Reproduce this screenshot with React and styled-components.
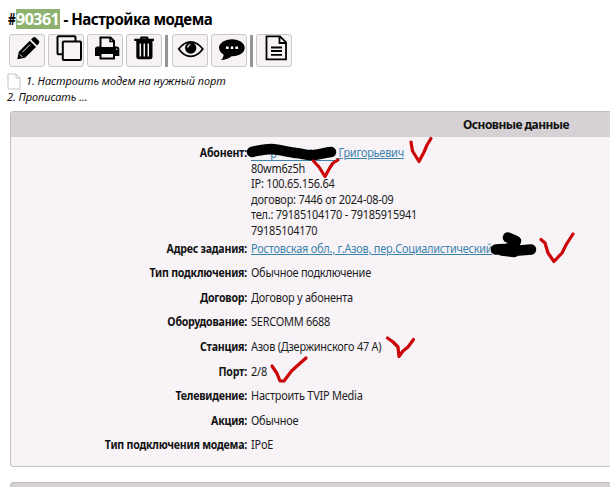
import React from 'react';
import styled, { createGlobalStyle } from 'styled-components';

const Global = createGlobalStyle`
  * { box-sizing: border-box; }
  body { margin: 0; background: #fff; color: #1c1c1c; overflow: hidden; font: 12px/15.6px "Noto Sans", sans-serif; }
`;
const Page = styled.main`
  position: relative; width: 610px; height: 487px; overflow: hidden; padding-top: 9px;
`;
const Title = styled.h1`
  margin: 0 0 0 8px; height: 20px; font-size: 16px; line-height: 20px; font-weight: 700; color: #000;
  display: flex; white-space: pre; letter-spacing: -0.5px;
`;
const TaskNumber = styled.span`background: #8eb16f; color: #fff; height: 20px; width: 44px; letter-spacing: -0.5px;`;
const TitleText = styled.span`transform: scaleX(0.94); transform-origin: left;`;
const Hash = styled.span`width: 10px; margin-right: -2px; letter-spacing: 0; transform: scaleX(0.75); transform-origin: left;`;
const Toolbar = styled.div`display: flex; align-items: center; height: 33px; margin: 5px 0 0 9px; gap: 3px;`;
const ToolButton = styled.button`
  width: 36px; height: 33px; padding: 0; flex: none;
  background: #f7f2f6; border: 1px solid #c9c7c9; border-radius: 3px;
`;
const Divider = styled.i`width: 3px; height: 32px; background: #949494; margin-right: ${p => p.$after}px; flex: none;`;
const Icon = styled.svg`display: block; margin: -1px; width: 36px; height: 33px; fill: none; stroke: #000; stroke-width: 2;`;
const Note = styled.div`
  margin: 6px 0 0 7px; height: 32px; font-size: 11px; line-height: 16px; font-style: italic; letter-spacing: -0.07px; color: #111;
`;
const NoteLine = styled.div`display: flex; height: 16px; white-space: nowrap;`;
const FileMark = styled.svg`width: 14px; height: 17px; margin-right: 5px; fill: #fff; stroke: #c6c4c6;`;
const Panel = styled.section`
  margin: 6px 0 0 10px; width: 1012px; height: 356px; background: #f7f3f7; border: 1px solid #bfbdbf; border-radius: 3px;
`;
const PanelHead = styled.h2`
  margin: 0; height: 25px; line-height: 25px; background: #d5d1d5; text-align: center; font-size: 12px; font-weight: 700; color: #111;
  letter-spacing: -0.55px;
`;
const NextPanel = styled(Panel)`margin-top: 15px; background: #d5d1d5;`;
const Row = styled.div`display: flex; margin-bottom: ${p => p.$gap ?? 9}px; white-space: nowrap;`;
const Label = styled.div`
  width: 236px; flex: none; text-align: right; font-weight: 700; letter-spacing: -0.25px; color: #111;
  transform: scaleX(0.882); transform-origin: right;
`;
const Value = styled.div`margin-left: 4px; letter-spacing: -0.25px; transform: scaleX(0.912); transform-origin: left;`;
const Link = styled.a`color: #3b83ab; text-decoration: underline;`;
const HiddenName = styled.span`
  display: inline-flex; width: 93px; height: 14px; padding-left: 21px; gap: 34px;
  border-bottom: 1px solid #3b83ab; line-height: 14px; vertical-align: bottom;
`;
const Details = styled.div`padding-top: 8px;`;
const Marks = styled.svg`
  position: absolute; inset: 0; width: 610px; height: 487px; fill: none;
  stroke-linecap: round; stroke-linejoin: round; pointer-events: none;
`;

const rows = [
  ['Тип подключения:', 'Обычное подключение'],
  ['Договор:', 'Договор у абонента'],
  ['Оборудование:', 'SERCOMM 6688'],
  ['Станция:', 'Азов (Дзержинского 47 А)'],
  ['Порт:', '2/8'],
  ['Телевидение:', 'Настроить TVIP Media'],
  ['Акция:', 'Обычное'],
  ['Тип подключения модема:', 'IPoE'],
];

const Tool = ({ label, children }) => (
  <ToolButton aria-label={label}><Icon viewBox="0 0 36 33">{children}</Icon></ToolButton>
);

const Tools = () => (
  <Toolbar>
    <Tool label="Изменить">
      <path d="M8.3 25.2L9.8 17.8L20.8 6.8L27 13L16 23.8ZM22 5.6L24 3.6Q25.3 2.4 26.6 3.6L29.8 6.8Q31 8 29.8 9.4L28 11.4Z" fill="#000" stroke="none" />
      <path d="M13.3 18.3L21 10.6M10.8 20.3L13.5 23" stroke="#f7f2f6" strokeWidth="1" />
    </Tool>
    <Tool label="Копировать">
      <rect x="9.5" y="2.3" width="18" height="18" rx="1" />
      <rect x="14.8" y="7.5" width="18.2" height="18.5" rx="1" fill="#f7f2f6" />
    </Tool>
    <Tool label="Печать">
      <path d="M8 22V15Q8 12.5 10.5 12.5H30Q32.3 12.5 32.3 15V22Z" fill="#000" stroke="none" />
      <path d="M13.5 14V3.5H23.5L27 7V14Z" fill="#f7f2f6" />
      <path d="M23 3.5V7.5H27" strokeWidth="1.5" />
      <rect x="12.5" y="13" width="15.5" height="3" fill="#000" stroke="none" />
      <rect x="13.5" y="19" width="13.5" height="5.5" fill="#f7f2f6" />
      <circle cx="29.8" cy="15.3" r="0.8" fill="#f7f2f6" stroke="none" />
    </Tool>
    <Tool label="Удалить">
      <path d="M8.3 5.8H28M14.6 5.5L15.5 3.5H21L22 5.5" strokeWidth="2.2" />
      <path d="M10.3 7H26.5V23Q26.5 25.3 24 25.3H12.8Q10.3 25.3 10.3 23Z" fill="#000" stroke="none" />
      <path d="M14.3 9.5V22.5M18.3 9.5V22.5M22.3 9.5V22.5" stroke="#f7f2f6" strokeWidth="1.5" />
    </Tool>
    <Divider $after={1} />
    <Tool label="Просмотр">
      <path d="M6.8 15Q12 7.8 18.7 7.8T30.8 15Q25.5 22.3 18.7 22.3T6.8 15Z" strokeWidth="1.8" />
      <circle cx="18.7" cy="14" r="5.7" fill="#000" stroke="none" />
      <path d="M15.7 13.5Q16 11 18.5 10.5" stroke="#fff" strokeWidth="1.2" />
    </Tool>
    <Tool label="Комментарий">
      <path d="M21 5.3C28 5.3 33.7 9 33.7 13.8C33.7 19 28 22.5 20.5 22.2C17.5 24.7 14 25.9 10 26Q12.5 23.8 12.7 20.7C9.8 19 8 16.6 8 13.8C8 9 14 5.3 21 5.3Z" fill="#000" stroke="none" />
      <path d="M15 13.8H17.6M19.7 13.8H22.3M24.4 13.8H27" stroke="#fff" strokeWidth="2.6" />
    </Tool>
    <Divider $after={0} />
    <Tool label="Документ">
      <path d="M10.5 2.3H24L30 8.3V25.3H10.5ZM23.5 2.5V9H30M15 13.5H26M15 17H26M15 20.8H26" strokeWidth="1.8" />
    </Tool>
  </Toolbar>
);

export default function App() {
  return <><Global /><Page>
    <Title><Hash>#</Hash><TaskNumber>90361</TaskNumber><TitleText> - Настройка модема</TitleText></Title>
    <Tools />
    <Note>
      <NoteLine><FileMark viewBox="0 0 14 17"><path d="M1 1H9L13 5V16H1ZM9 1V5H13" /></FileMark>1. Настроить модем на нужный порт</NoteLine>
      <NoteLine>2. Прописать ...</NoteLine>
    </Note>
    <Panel><PanelHead>Основные данные</PanelHead><Details>
      <Row $gap={2}>
        <Label>Абонент:</Label>
        <Value><Link><HiddenName><span>р</span><span>А</span></HiddenName> Григорьевич</Link><br />80wm6z5h<br />IP: 100.65.156.64<br />договор: 7446 от 2024-08-09<br />тел.: 79185104170 - 79185915941<br />79185104170</Value>
      </Row>
      <Row><Label>Адрес задания:</Label><Value><Link>Ростовская обл., г.Азов, пер.Социалистический</Link></Value></Row>
      {rows.map(([label, value]) => <Row key={label}><Label>{label}</Label><Value>{value}</Value></Row>)}
    </Details></Panel>
    <NextPanel />
    <Marks viewBox="0 0 610 487">
      <g stroke="#000" strokeWidth="10.5">
        <path d="M252 152C260 150.5 264 149 271 149C280 149.5 288 152 296 153C304 153.5 306 156 314 155S325 152.5 331 152" />
        <path d="M496 249.5L504 249L513 251L531 249.5M508 237.5L516 241L512 247L502 250.5L514 252" />
      </g>
      <g stroke="#cc0508" strokeWidth="3.2">
        <path d="M411 142L412.5 151L419 161.5L424 152L427 145L431 138.5" />
        <path d="M313.5 161L319 167L325 176.5L330 167.5L333 163L338 160" />
        <path d="M541 239.5L545 243L548 253L554 261.5L562 253L566.5 244L573 234" />
        <path d="M272 366L277 373.5L280 381H284L291.5 371L297 366L306 358" />
        <path d="M387.5 338L393 342L398 347L399 356.5L403 351L408 347L413.5 339.5" />
      </g>
    </Marks>
  </Page></>;
}
